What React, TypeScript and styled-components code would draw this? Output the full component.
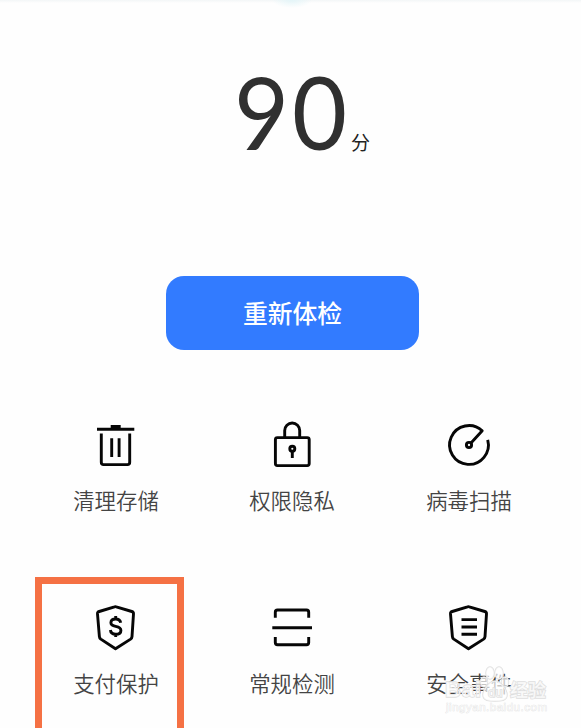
import React from 'react';
import styled, { createGlobalStyle } from 'styled-components';

const GlobalStyle = createGlobalStyle`
  body { margin: 0; background: #fefefe; }
  * { box-sizing: border-box; }
`;

const Page = styled.main`
  position: relative;
  display: flex;
  flex-direction: column;
  width: 581px;
  height: 728px;
  overflow: hidden;
  background: #fefefe;
  font-family: 'Noto Sans CJK SC', sans-serif;
`;

const TopGlow = styled.div`
  flex: none;
  height: 8px;
  background: radial-gradient(ellipse 20px 8px at 292px 0, #e4f5f8, transparent),
    linear-gradient(#f3f6f7, #fefefe 3px);
`;

const Score = styled.header`
  display: flex;
  flex: none;
  align-items: baseline;
  height: 268px;
  padding: 43px 0 0 234px;
  color: #303030;
`;

const ScoreValue = styled.span`
  width: 115px;
  font: 400 101px/120px Lato, sans-serif;
  letter-spacing: 3px;
  transform: scaleX(0.94);
  transform-origin: left;
`;

const ScoreUnit = styled.span`
  margin-left: 2px;
  font-size: 19px;
  line-height: 24px;
  color: #222;
`;

const CheckButton = styled.button`
  flex: none;
  width: 253px;
  height: 74px;
  margin-left: 166px;
  padding: 0 0 2px;
  border: 0;
  border-radius: 18px;
  background: #327bff;
  color: #fff;
  font: 500 24.8px/36px 'Noto Sans CJK SC', sans-serif;
`;

const FeatureGrid = styled.section`
  display: grid;
  flex: none;
  grid-template-columns: 176px 176px 178px;
  grid-auto-rows: 183px;
  margin: 71px 0 0 28px;
`;

const Feature = styled.div`
  display: flex;
  flex-direction: column;
  align-items: center;
`;

const Glyph = styled.svg`
  flex: none;
  width: 48px;
  height: 48px;
  fill: none;
  stroke: #060606;
  stroke-width: 2.9;
  stroke-linejoin: round;
`;

const Label = styled.span`
  margin-top: 15px;
  font-size: 21.4px;
  font-weight: 350;
  line-height: 32px;
  color: #444;
  white-space: nowrap;
`;

const Highlight = styled.div`
  position: absolute;
  left: 35px;
  top: 577px;
  width: 149px;
  height: 170px;
  border: 7px solid #f57144;
`;

const Watermark = styled.div`
  position: absolute;
  left: 444px;
  top: 664px;
  width: 108px;
  height: 52px;
`;

const WatermarkArt = styled.svg`
  display: block;
  width: 108px;
  height: 52px;
  fill: #fff;
  fill-opacity: 0.7;
  stroke: #dedede;
  stroke-width: 1.4;
  paint-order: stroke;
  font-family: 'Liberation Sans', 'Noto Sans CJK SC', sans-serif;
`;

const Shield = () => (
  <path d="M22.5 2.8q.9-.3 1.8 0L39.8 7.5q1.8.6 1.7 2.4L40 32.6q-.1 1.6-1.4 2.5L23.5 44.8 8.8 35.1q-1.3-.9-1.4-2.5L5.5 9.9q-.1-1.8 1.7-2.4Z" />
);

const features: { label: string; art: React.ReactNode }[] = [
  {
    label: '清理存储',
    art: <path d="M5 8.3H42.3M18.7 5.5H28.7M9.3 12.5V41.3q0 2.3 2.3 2.3H35.4q2.3 0 2.3-2.3V12.5M19.7 17.3V36M27.1 17.3V36" />,
  },
  {
    label: '权限隐私',
    art: (
      <>
        <rect x="7.4" y="16.6" width="33.8" height="28" rx="2" />
        <path d="M16.7 16.6V9.5a7.5 7.5 0 0 1 15 0V16.6M24.3 30V37" />
        <circle cx="24.3" cy="27.8" r="2.5" />
      </>
    ),
  },
  {
    label: '病毒扫描',
    art: (
      <>
        <path d="M42.7 18.9A19.4 19.4 0 1 1 37.2 9.8L26 22" />
        <circle cx="24" cy="24" r="2.6" />
      </>
    ),
  },
  {
    label: '支付保护',
    art: (
      <>
        <Shield />
        <path d="M28.7 18.8C28.2 16.2 26.3 15 23.7 15C20.8 15 18.9 16.4 18.9 18.7C18.9 21 20.7 21.7 23.7 22.3C27 23 28.9 24 28.9 26.4C28.9 28.8 26.8 30.2 23.8 30.2C20.8 30.2 18.7 28.8 18.4 26M23.7 12V15M23.7 30V33" />
      </>
    ),
  },
  {
    label: '常规检测',
    art: <path d="M7.3 13.7V8.2q0-2.2 2.2-2.2H38.5q2.2 0 2.2 2.2V13.7M4.3 23.7H44M7.3 33V38.5q0 2.2 2.2 2.2H38.5q2.2 0 2.2-2.2V33" />,
  },
  {
    label: '安全事件',
    art: (
      <>
        <Shield />
        <path d="M16.5 15.6H32M16.5 23H32M16.5 30.3H32" />
      </>
    ),
  },
];

export default function App() {
  return (
    <Page>
      <GlobalStyle />
      <TopGlow />
      <Score>
        <ScoreValue>90</ScoreValue>
        <ScoreUnit>分</ScoreUnit>
      </Score>
      <CheckButton>重新体检</CheckButton>
      <FeatureGrid>
        {features.map(({ label, art }) => (
          <Feature key={label}>
            <Glyph viewBox="0 0 48 48">{art}</Glyph>
            <Label>{label}</Label>
          </Feature>
        ))}
      </FeatureGrid>
      <Highlight />
      <Watermark>
        <WatermarkArt viewBox="0 0 108 52">
          <text x="1" y="33" fontSize="22" fontWeight="700" textLength="36">Bai</text>
          <ellipse cx="46" cy="9" rx="4" ry="6" />
          <ellipse cx="55" cy="9" rx="4" ry="6" />
          <ellipse cx="40" cy="18" rx="3.5" ry="5" />
          <ellipse cx="61" cy="18" rx="3.5" ry="5" />
          <path d="M51 17c-5 0-12 8-12 14s7 6 12 6 12 0 12-6-7-14-12-14Z" />
          <text x="44" y="33" fontSize="13">du</text>
          <text x="66" y="33" fontSize="18" fontWeight="700">经验</text>
          <text x="2" y="47" fontSize="11.5" textLength="101" strokeWidth="0.6">jingyan.baidu.com</text>
        </WatermarkArt>
      </Watermark>
    </Page>
  );
}
